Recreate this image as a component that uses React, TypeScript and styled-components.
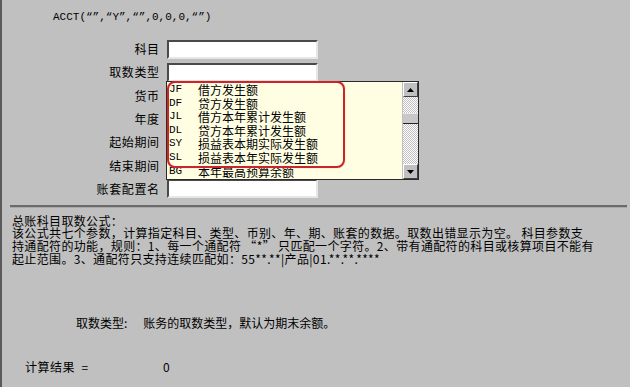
import styled, { createGlobalStyle } from 'styled-components';

const GlobalStyle = createGlobalStyle`
  html, body {
    margin: 0;
    padding: 0;
    background: #c0c0c0;
  }
`;

const Page = styled.div`
  position: relative;
  box-sizing: border-box;
  width: 630px;
  height: 387px;
  overflow: hidden;
  background: #c0c0c0;
  border-left: 2px solid #5a5a5a;
  font-family: 'Noto Sans CJK SC', 'Noto Sans', sans-serif;
  font-size: 12px;
  color: #000;
`;

const Formula = styled.div`
  padding: 11px 0 0 51px;
  height: 13px;
  line-height: 13px;
  font-family: 'Liberation Mono', 'Noto Sans CJK SC', monospace;
  font-size: 11px;
`;

const Form = styled.div`
  display: grid;
  grid-template-columns: 157px 151px;
  grid-auto-rows: 23.3px;
  column-gap: 8px;
  margin-top: 13.5px;
`;

const Label = styled.div`
  align-self: center;
  justify-self: end;
  line-height: 14px;
  letter-spacing: 0.6px;
  margin-right: -0.6px;
  white-space: nowrap;
`;

const Field = styled.div`
  align-self: center;
  box-sizing: border-box;
  height: 19px;
  background: #fff;
  border: 2px solid;
  border-color: #4a4a4a #e6e6e6 #e6e6e6 #4a4a4a;
`;

const ListBox = styled.div`
  position: absolute;
  top: 81px;
  left: 164px;
  box-sizing: border-box;
  width: 253px;
  height: 99px;
  display: flex;
  background: #fffee3;
  border: 1px solid #2a2a2a;
`;

const Options = styled.div`
  flex: 1;
  display: flex;
  flex-direction: column;
  padding: 1px 0 0 2px;
`;

const Option = styled.div`
  display: flex;
  height: 13.6px;
  line-height: 13.6px;
  white-space: nowrap;
`;

const Code = styled.span`
  width: 29px;
  font-family: 'Liberation Mono', monospace;
  font-size: 11px;
`;

const ScrollBar = styled.div`
  width: 15px;
  display: flex;
  flex-direction: column;
  background: repeating-conic-gradient(#c0c0c0 0 25%, #fff 0 50%) 0 0 / 2px 2px;
  border-left: 1px solid #c0c0c0;
`;

const ArrowButton = styled.div`
  box-sizing: border-box;
  height: 15px;
  display: flex;
  align-items: center;
  justify-content: center;
  background: #c0c0c0;
  border: 1px solid;
  border-color: #fff #404040 #404040 #fff;
`;

const Track = styled.div<{ $grow?: boolean }>`
  flex: ${(p) => (p.$grow ? 1 : 'none')};
  height: ${(p) => (p.$grow ? 'auto' : '16px')};
`;

const Thumb = styled.div`
  box-sizing: border-box;
  height: 11px;
  background: #c8c8c8;
  border-top: 1px solid #e8e8e8;
  border-bottom: 1px solid #222;
`;

const Highlight = styled.div`
  position: absolute;
  top: 81px;
  left: 165px;
  box-sizing: border-box;
  width: 178px;
  height: 87px;
  border: 2px solid #c9252b;
  border-radius: 8px;
  box-shadow: 0 0 1px rgba(201, 37, 43, 0.5);
  pointer-events: none;
`;

const Separator = styled.div`
  margin: 4.5px 3px 0 8px;
  height: 2px;
  background: #6a6a6a;
  border-bottom: 1px solid #a8a8a8;
`;

const Description = styled.div`
  margin-top: 6.5px;
  padding-left: 10px;
  line-height: 12.7px;
  letter-spacing: 0.35px;
  white-space: nowrap;
`;

const Hint = styled.div`
  display: flex;
  gap: 16px;
  margin-top: 51px;
  padding-left: 74px;
  line-height: 13px;
`;

const Result = styled.div`
  display: grid;
  grid-template-columns: 138px auto;
  margin-top: 31px;
  padding-left: 23px;
  line-height: 13px;
  letter-spacing: 0.5px;
  white-space: pre;
`;

const Triangle = ({ up }: { up?: boolean }) => (
  <svg width="7" height="4" viewBox="0 0 7 4">
    <path d={up ? 'M0 4 L3.5 0 L7 4 Z' : 'M0 0 L3.5 4 L7 0 Z'} fill="#000" />
  </svg>
);

const fields = ['科目', '取数类型', '货币', '年度', '起始期间', '结束期间', '账套配置名'];

const options = [
  ['JF', '借方发生额'],
  ['DF', '贷方发生额'],
  ['JL', '借方本年累计发生额'],
  ['DL', '贷方本年累计发生额'],
  ['SY', '损益表本期实际发生额'],
  ['SL', '损益表本年实际发生额'],
  ['BG', '本年最高预算余额'],
];

export default function App() {
  return (
    <>
      <GlobalStyle />
      <Page>
        <Formula>ACCT(“”,“Y”,“”,0,0,0,“”)</Formula>
        <Form>
          {fields.flatMap((f) => [
            <Label key={f}>{f}</Label>,
            <Field key={f + '-field'} />,
          ])}
        </Form>
        <Separator />
        <Description>
          <div>总账科目取数公式：</div>
          <div>该公式共七个参数，计算指定科目、类型、币别、年、期、账套的数据。取数出错显示为空。 科目参数支</div>
          <div>持通配符的功能，规则：1、每一个通配符 “*” 只匹配一个字符。2、带有通配符的科目或核算项目不能有</div>
          <div>起止范围。3、通配符只支持连续匹配如：55**.**|产品|01.**.**.****</div>
        </Description>
        <Hint>
          <span>取数类型:</span>
          <span>账务的取数类型，默认为期末余额。</span>
        </Hint>
        <Result>
          <span>计算结果  =</span>
          <span>0</span>
        </Result>

        <ListBox>
          <Options>
            {options.map(([code, name]) => (
              <Option key={code}>
                <Code>{code}</Code>
                <span>{name}</span>
              </Option>
            ))}
          </Options>
          <ScrollBar>
            <ArrowButton>
              <Triangle up />
            </ArrowButton>
            <Track />
            <Thumb />
            <Track $grow />
            <ArrowButton>
              <Triangle />
            </ArrowButton>
          </ScrollBar>
        </ListBox>
        <Highlight />
      </Page>
    </>
  );
}
